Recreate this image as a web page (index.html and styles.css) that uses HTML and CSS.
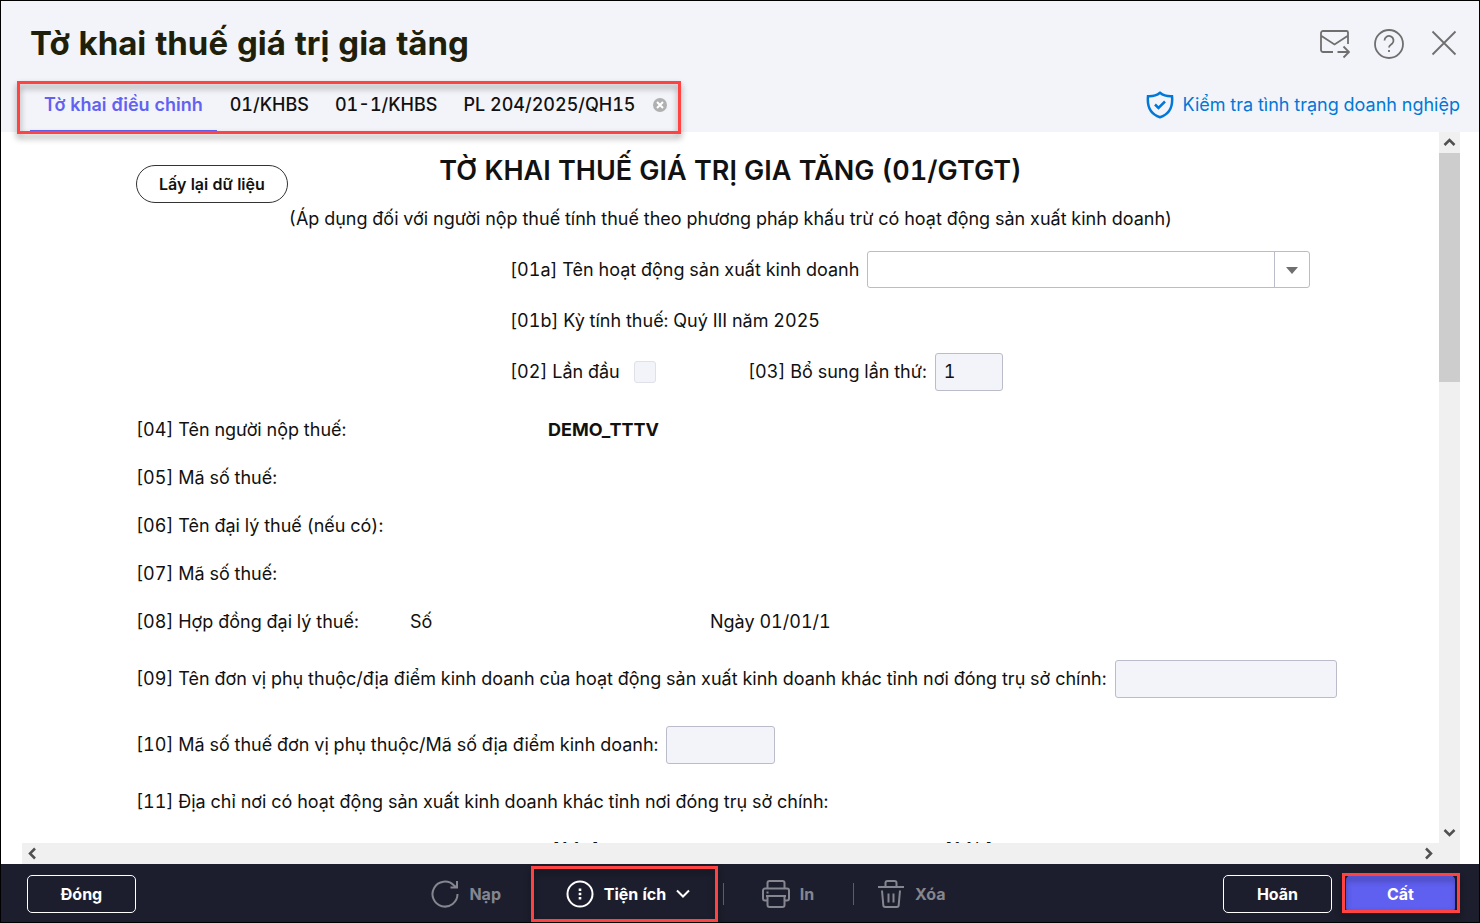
FILE: index.html
```html
<!doctype html>
<html lang="vi">
<head>
    <meta charset="UTF-8">
    <meta name="viewport" content="width=device-width, initial-scale=1.0">
    <title>Tờ khai thuế giá trị gia tăng</title>
    <link rel="stylesheet" href="styles.css">
</head>
<body>
<div class="window">
    <header class="header">
        <div class="header-top">
            <h1 class="header-title">Tờ khai thuế giá trị gia tăng</h1>
            <div class="header-icons">
                <button class="icon-btn" type="button" aria-label="Gửi email">
                    <svg width="32" height="32" viewBox="0 0 32 32">
                        <path d="M15 25H5a2 2 0 0 1-2-2V6a2 2 0 0 1 2-2h23.500a1.500 1.500 0 0 1 1.500 1.500V17M3.500 9L16.500 17.500 29.500 9M19.500 25H31M25.500 19.500l5.500 5.500-5.500 5.500"/>
                    </svg>
                </button>
                <button class="icon-btn" type="button" aria-label="Trợ giúp">
                    <svg width="32" height="32" viewBox="0 0 32 32">
                        <circle cx="16" cy="17" r="14"/>
                        <path d="M11.500 13.500a4.500 4.500 0 1 1 7.500 3.300c-1.800 1.200-3 1.700-3 3.700M16 23v2"/>
                    </svg>
                </button>
                <button class="icon-btn" type="button" aria-label="Đóng cửa sổ">
                    <svg width="32" height="32" viewBox="0 0 32 32">
                        <path d="M4.500 4.500l23 23M27.500 4.500l-23 23"/>
                    </svg>
                </button>
            </div>
        </div>
        <div class="header-bottom">
            <nav class="tabs">
                <button class="tab active" type="button">Tờ khai điều chỉnh</button>
                <button class="tab" type="button">01/KHBS</button>
                <button class="tab" type="button">01-1/KHBS</button>
                <button class="tab" type="button">PL 204/2025/QH15</button>
                <button class="tab-close" type="button" aria-label="Đóng tab">
                    <svg width="14" height="14" viewBox="0 0 14 14">
                        <circle cx="7" cy="7" r="7"/>
                        <path d="M4 4l6 6M10 4l-6 6"/>
                    </svg>
                </button>
                <span class="mark mark-tabs"></span>
            </nav>
            <a class="check-link" href="#">
                <svg width="28" height="28" viewBox="0 0 28 28">
                    <path d="M14 1.800C11 4.300 6 5.500 2 5.300c-1 10 1.500 17.500 12 20.900 10.500-3.400 13-10.900 12-20.900-4 .2-9-1-12-3.500z"/>
                    <path d="M9 13.500l3.500 3.500 6.500-6.500"/>
                </svg>
                <span>Kiểm tra tình trạng doanh nghiệp</span>
            </a>
        </div>
    </header>

    <main class="scroller">
        <form class="form">
            <div class="form-head">
                <button class="reload-btn" type="button">Lấy lại dữ liệu</button>
                <h2 class="form-title">TỜ KHAI THUẾ GIÁ TRỊ GIA TĂNG (01/GTGT)</h2>
            </div>
            <p class="form-note">(Áp dụng đối với người nộp thuế tính thuế theo phương pháp khấu trừ có hoạt động sản xuất kinh doanh)</p>

            <div class="period">
                <div class="period-row">
                    <label for="activity">[01a] Tên hoạt động sản xuất kinh doanh</label>
                    <span class="combo">
                        <select id="activity"><option></option></select>
                        <svg class="combo-arrow" width="12" height="8" viewBox="0 0 12 8"><path d="M0 0h12L6 7z"/></svg>
                    </span>
                </div>
                <div class="period-row">[01b] Kỳ tính thuế: Quý III năm 2025</div>
                <div class="period-row">
                    <div class="first-time">
                        <label for="first">[02] Lần đầu</label>
                        <input class="check" id="first" type="checkbox" disabled>
                    </div>
                    <label for="times">[03] Bổ sung lần thứ:</label>
                    <input class="field field-short" id="times" type="text" value="1" readonly>
                </div>
            </div>

            <div class="row"><span class="row-name">[04] Tên người nộp thuế:</span><b>DEMO_TTTV</b></div>
            <div class="row">[05] Mã số thuế:</div>
            <div class="row">[06] Tên đại lý thuế (nếu có):</div>
            <div class="row">[07] Mã số thuế:</div>
            <div class="row">
                <span class="contract-name">[08] Hợp đồng đại lý thuế:</span>
                <span class="contract-no">Số</span>
                <span>Ngày 01/01/1</span>
            </div>
            <div class="row row-tall">
                <label for="unit">[09] Tên đơn vị phụ thuộc/địa điểm kinh doanh của hoạt động sản xuất kinh doanh khác tỉnh nơi đóng trụ sở chính:</label>
                <input class="field field-long" id="unit" type="text" readonly>
            </div>
            <div class="row row-tall">
                <label for="unit-code">[10] Mã số thuế đơn vị phụ thuộc/Mã số địa điểm kinh doanh:</label>
                <input class="field field-medium" id="unit-code" type="text" readonly>
            </div>
            <div class="row">[11] Địa chỉ nơi có hoạt động sản xuất kinh doanh khác tỉnh nơi đóng trụ sở chính:</div>
            <div class="row row-address"><span>[11a]</span><span>[11b]</span></div>
        </form>
        <div class="vbar">
            <svg class="bar-arrow" width="21" height="21" viewBox="0 0 21 21"><path d="M5.500 13l5-5 5 5"/></svg>
            <div class="vbar-thumb"></div>
            <svg class="bar-arrow" width="21" height="21" viewBox="0 0 21 21"><path d="M5.500 8l5 5 5-5"/></svg>
        </div>
        <div class="hbar">
            <svg class="bar-arrow" width="21" height="21" viewBox="0 0 21 21"><path d="M13 5.500l-5 5 5 5"/></svg>
            <svg class="bar-arrow" width="21" height="21" viewBox="0 0 21 21"><path d="M8 5.500l5 5-5 5"/></svg>
        </div>
        <div class="corner"></div>
    </main>

    <footer class="footer">
        <button class="btn" type="button">Đóng</button>
        <div class="tools">
            <button class="tool" type="button" disabled>
                <svg width="28" height="28" viewBox="0 0 28 28">
                    <path d="M26.500 14A12.500 12.500 0 1 1 22.800 5.200L26 7.500M26 1v6.500h-6.500"/>
                </svg>
                <span>Nạp</span>
            </button>
            <button class="tool tool-on" type="button">
                <svg width="28" height="28" viewBox="0 0 28 28">
                    <circle cx="14" cy="14" r="12.500"/>
                    <path class="dots" d="M12.700 8.500h2.600v2.600h-2.600zM12.700 12.700h2.600v2.600h-2.600zM12.700 16.900h2.600v2.600h-2.600z"/>
                </svg>
                <span>Tiện ích</span>
                <svg width="14" height="10" viewBox="0 0 14 10"><path d="M1 1.500l6 6 6-6"/></svg>
                <span class="mark mark-tool"></span>
            </button>
            <button class="tool tool-print" type="button" disabled>
                <svg width="28" height="28" viewBox="0 0 28 28">
                    <path d="M5.500 8.500V3a2 2 0 0 1 2-2h13a2 2 0 0 1 2 2v5.500M5.500 20.500H3a2 2 0 0 1-2-2v-8a2 2 0 0 1 2-2h22a2 2 0 0 1 2 2v8a2 2 0 0 1-2 2h-2.500M4 16h20M5.500 16v9a2 2 0 0 0 2 2h13a2 2 0 0 0 2-2v-9M4.500 12.500h2"/>
                </svg>
                <span>In</span>
            </button>
            <button class="tool" type="button" disabled>
                <svg width="28" height="28" viewBox="0 0 28 28">
                    <path d="M1 7h26M8.500 7V3a2 2 0 0 1 2-2h7a2 2 0 0 1 2 2v4M5 10.500l1.300 14.500a2 2 0 0 0 2 2h11.400a2 2 0 0 0 2-2L23 10.500M11.500 13.500v9M16.500 13.500v9"/>
                </svg>
                <span>Xóa</span>
            </button>
        </div>
        <div class="actions">
            <button class="btn" type="button">Hoãn</button>
            <button class="btn btn-primary" type="button">Cất<span class="mark mark-save"></span></button>
        </div>
    </footer>
</div>
</body>
</html>
```
FILE: styles.css
```css
* {
    box-sizing: border-box;
    margin: 0;
    padding: 0;
}

html, body {
    height: 100%;
}

body {
    font-family: Inter, "Liberation Sans", sans-serif;
    font-size: 18px;
    line-height: 24px;
    font-variant-numeric: tabular-nums;
    color: #111;
}

button, input, select {
    font: inherit;
    font-variant-numeric: inherit;
    color: inherit;
}

button {
    border: none;
    background: none;
}

svg {
    display: block;
    flex: none;
    fill: none;
    stroke: currentColor;
    stroke-width: 2;
}

.window {
    display: flex;
    flex-direction: column;
    height: 100%;
    border: 1px solid #000;
    background-color: #fff;
    overflow: hidden;
}

/* header */
.header {
    padding: 7px 19px 0 29px;
    background-color: #f3f4f9;
}

.header-top {
    display: flex;
    align-items: center;
    justify-content: space-between;
    height: 70px;
}

.header-title {
    font-size: 33px;
    line-height: 40px;
    font-weight: 700;
    color: #1f1f0a;
}

.header-icons {
    display: flex;
    gap: 23px;
    color: #6f6f6f;
}

.icon-btn svg {
    stroke-width: 1.8;
}

.header-bottom {
    display: flex;
    align-items: center;
    justify-content: space-between;
    height: 54px;
}

.tabs {
    position: relative;
    display: flex;
    align-items: center;
    height: 100%;
}

.tab {
    height: 100%;
    padding: 0 13px;
    font-weight: 500;
    border-top: 2px solid transparent;
    border-bottom: 2px solid transparent;
}

.tab.active {
    padding: 0 14px;
    font-weight: 600;
    color: #6161f2;
    border-bottom-color: #6161f2;
}

.tab-close {
    margin-left: 4px;
    color: #b0b0b0;
}

.tab-close circle {
    fill: currentColor;
    stroke: none;
}

.tab-close path {
    stroke: #fff;
}

.check-link {
    display: flex;
    align-items: center;
    gap: 9px;
    color: #0078d7;
    text-decoration: none;
}

.check-link svg {
    stroke-width: 2.5;
}

/* red frames */
.mark {
    position: absolute;
    border: 3px solid #ff4343;
    filter: drop-shadow(0 4px 3px rgba(0, 0, 0, 0.4));
    pointer-events: none;
}

.mark-tabs {
    inset: 3px -14px -2px -13px;
    z-index: 1;
}

.mark-tool {
    inset: 0 5px 0 -2px;
}

.mark-save {
    inset: -3px -6px -1px -5px;
}

/* form */
.scroller {
    flex: 1;
    min-height: 0;
    display: grid;
    grid-template-columns: 1fr 21px;
    grid-template-rows: 1fr 21px;
    margin: 0 19px 0 21px;
}

.form {
    min-width: 0;
    min-height: 0;
    overflow: hidden;
    padding: 15px 114px 0;
    white-space: nowrap;
}

.form-head {
    display: grid;
    grid-template-columns: 1fr auto 1fr;
    height: 48px;
}

.reload-btn {
    justify-self: start;
    height: 38px;
    margin-top: 18px;
    padding: 0 22px;
    border: 1px solid #333;
    border-radius: 19px;
    font-size: 16px;
    font-weight: 600;
}

.form-title {
    font-size: 27px;
    line-height: 48px;
    font-weight: 600;
}

.form-note {
    line-height: 48px;
    text-align: center;
}

.period {
    margin: 1px 0 9px 374px;
}

.period-row {
    display: flex;
    align-items: center;
    gap: 8px;
    height: 51px;
}

.combo {
    position: relative;
    width: 443px;
}

.combo select {
    display: block;
    width: 100%;
    height: 37px;
    padding: 0 46px 0 10px;
    appearance: none;
    border: 1px solid #babcc9;
    border-radius: 3px;
    background: linear-gradient(#babcc9, #babcc9) right 34px top / 1px 100% no-repeat #fff;
}

.combo-arrow {
    position: absolute;
    right: 12px;
    top: 16px;
    fill: #6f6f6f;
    stroke: none;
    pointer-events: none;
}

.first-time {
    display: flex;
    align-items: center;
    gap: 14px;
    width: 230px;
}

.check {
    width: 22px;
    height: 22px;
    appearance: none;
    border: 1px solid #e0e0ea;
    border-radius: 3px;
    background-color: #f3f4f9;
}

.field {
    height: 38px;
    padding: 0 8px;
    border: 1px solid #babcc9;
    border-radius: 3px;
    background-color: #f3f4f9;
}

.field-short {
    width: 68px;
}

.field-medium {
    width: 109px;
}

.field-long {
    width: 222px;
}

.row {
    display: flex;
    align-items: center;
    gap: 8px;
    height: 48px;
}

.row-tall {
    height: 66px;
}

.row-name {
    width: 404px;
}

.contract-name {
    width: 266px;
}

.contract-no {
    width: 292px;
}

.row-address {
    gap: 345px;
    padding-left: 416px;
}

/* scrollbars */
.vbar {
    display: flex;
    flex-direction: column;
    background-color: #f0f0f0;
}

.vbar-thumb {
    height: 229px;
    margin-bottom: auto;
    background-color: #cdcdcd;
}

.hbar {
    display: flex;
    justify-content: space-between;
    background-color: #f0f0f0;
}

.corner {
    background-color: #f0f0f0;
}

.bar-arrow {
    color: #505050;
    stroke-width: 2.5;
}

/* footer */
.footer {
    display: flex;
    align-items: center;
    justify-content: space-between;
    height: 58px;
    padding: 2px 24px 0 26px;
    background-color: #1c1e2d;
    color: #fff;
}

.btn {
    position: relative;
    width: 109px;
    height: 38px;
    border: 1px solid #fff;
    border-radius: 5px;
    font-size: 16px;
    font-weight: 700;
}

.btn-primary {
    border-color: #5f5ff0;
    background-color: #5f5ff0;
}

.actions {
    display: flex;
    gap: 14px;
}

.tools {
    display: flex;
    height: 100%;
}

.tool {
    position: relative;
    display: flex;
    align-items: center;
    justify-content: center;
    gap: 10px;
    padding: 0 32px;
    font-size: 16px;
    font-weight: 700;
    color: #85868f;
}

.tool + .tool::before {
    content: "";
    position: absolute;
    left: 0;
    top: 17px;
    width: 1px;
    height: 22px;
    background-color: #5c5d68;
}

.tool-on {
    min-width: 190px;
    color: #fff;
}

.tool .dots {
    fill: currentColor;
    stroke: none;
}

.tool-print {
    min-width: 130px;
}

.tool:last-child {
    padding: 0 14px 0 24px;
}
```
